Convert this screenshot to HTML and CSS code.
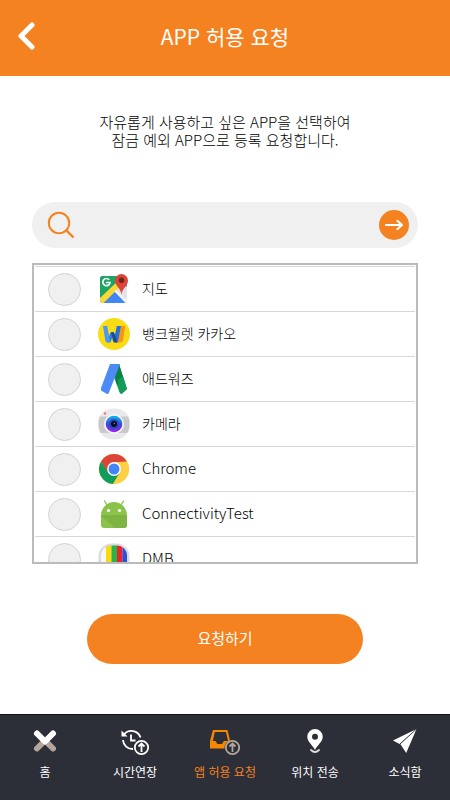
FILE: index.html
```html
<!DOCTYPE html>
<html lang="ko">
<head>
<meta charset="utf-8">
<meta name="viewport" content="width=device-width, initial-scale=1">
<title>APP 허용 요청</title>
<link rel="stylesheet" href="styles.css">
</head>
<body>
<div class="screen">
  <header class="topbar">
    <button class="back" type="button" aria-label="뒤로">
      <svg width="20" height="30" viewBox="0 0 20 30"><path d="M14 4L3 15l11 11" fill="none" stroke="#fff" stroke-width="5" stroke-linecap="round" stroke-linejoin="round"/></svg>
    </button>
    <h1 class="title">APP 허용 요청</h1>
  </header>

  <main class="content">
    <p class="intro">자유롭게 사용하고 싶은 APP을 선택하여<br>잠금 예외 APP으로 등록 요청합니다.</p>

    <form class="search">
      <label class="search-icon" for="query" aria-label="검색">
        <svg width="28" height="28" viewBox="0 0 28 28" fill="none" stroke="#f58220" stroke-width="2"><circle cx="12" cy="12" r="10.200"/><path d="M19 19l7.500 7.500" stroke-width="2.400"/></svg>
      </label>
      <input class="search-input" id="query" type="text">
      <button class="search-go" type="button" aria-label="검색하기">
        <svg width="20" height="14" viewBox="0 0 20 14" fill="none" stroke="#fff" stroke-width="2.200" stroke-linecap="round" stroke-linejoin="round"><path d="M2 7h16M13.500 3L18 7l-4.500 4"/></svg>
      </button>
    </form>

    <ul class="apps">
      <li class="app">
        <input class="check" type="checkbox" id="app1">
        <svg class="app-icon" viewBox="0 0 32 32">
          <rect x="2" y="3" width="27" height="27" rx="3" fill="#4285f4"/>
          <path d="M5 3h20v5L2 29V6a3 3 0 0 1 3-3z" fill="#1da362"/>
          <path d="M16 18l13 12V14l-5-4z" fill="#e4e4e8"/>
          <path d="M16 18L4 30h22z" fill="#4285f4"/>
          <path d="M22 6L2 25v3l1.500 2h2L26 10z" fill="#fdd835"/>
          <path d="M16 18l11.500 12 1.500-2.500-11-10.500z" fill="#f5f5f5"/>
          <path d="M11.200 6.800a3.600 3.600 0 1 0 .8 2.700H8" fill="none" stroke="#fff" stroke-width="1.700"/>
          <path d="M23.500 22C23 15 17 13 17 7.500a6.500 6.500 0 0 1 13 0C30 13 24 15 23.500 22z" fill="#db4437"/>
          <circle cx="23.500" cy="7.200" r="2.700" fill="#6d2420"/>
        </svg>
        <label class="app-name" for="app1">지도</label>
      </li>
      <li class="app">
        <input class="check" type="checkbox" id="app2">
        <svg class="app-icon" viewBox="0 0 32 32">
          <circle cx="16" cy="16" r="16" fill="#f9dc16"/>
          <path d="M23 8h4.200L25 22.500q-.5 2-3 2h-3z" fill="#f7941e"/>
          <path d="M9 24.500L12 15.500q.6-1.500 2-1.500h2l-3 9q-.6 1.500-2 1.500z" fill="#2d7de0"/>
          <path d="M5 8h4.200l3 16.500H10q-2.300 0-2.700-2z" fill="#4a9af2"/>
          <path d="M18.800 8H23l-3 15q-.4 1.500-2 1.500h-1.500l-.5-3z" fill="#2372d9"/>
          <path d="M13 14h1.500q1.500 0 2 1.500l3 9H17q-1.400 0-2-1.500z" fill="#1b4c9c"/>
        </svg>
        <label class="app-name" for="app2">뱅크월렛 카카오</label>
      </li>
      <li class="app">
        <input class="check" type="checkbox" id="app3">
        <svg class="app-icon" viewBox="0 0 32 32">
          <path d="M12 1h9l8 25-5.500 5q-1.500-.5-2-2L12 4z" fill="#0f9d58"/>
          <path d="M17 13l4-12 4 13-6 8z" fill="#0b8043"/>
          <path d="M20 17l5-4 4 13-5.500 5q-1.500-.5-2-2z" fill="#159b58"/>
          <path d="M12 1h10L11 29.500q-.7 1.700-2 1.500L3 27.500V25z" fill="#4c8bf5"/>
        </svg>
        <label class="app-name" for="app3">애드워즈</label>
      </li>
      <li class="app">
        <input class="check" type="checkbox" id="app4">
        <svg class="app-icon" viewBox="0 0 32 32">
          <defs>
            <linearGradient id="lens" x1="0" y1="0" x2="0" y2="1"><stop offset="0" stop-color="#06b9ea"/><stop offset=".55" stop-color="#4440e8"/><stop offset="1" stop-color="#a01cf4"/></linearGradient>
            <clipPath id="camera"><rect x=".5" y=".5" width="31" height="31" rx="14"/></clipPath>
          </defs>
          <g clip-path="url(#camera)">
            <path d="M0 0h32v32H0z" fill="#e9e9eb"/>
            <path d="M0 8.500h32V25H0z" fill="#c9c9ca"/>
          </g>
          <circle cx="16" cy="16" r="10" fill="#f6f6f6"/>
          <circle cx="16" cy="16" r="8.300" fill="url(#lens)"/>
          <circle cx="16" cy="16" r="5" fill="#274da9"/>
          <circle cx="16" cy="16" r="3" fill="#080a29"/>
          <circle cx="16.300" cy="15.500" r=".8" fill="#7185bd"/>
          <circle cx="7" cy="5.500" r="1.200" fill="#ee7960"/>
        </svg>
        <label class="app-name" for="app4">카메라</label>
      </li>
      <li class="app">
        <input class="check" type="checkbox" id="app5">
        <svg class="app-icon" viewBox="0 0 32 32">
          <circle cx="16" cy="16" r="15" fill="#fdd044"/>
          <path d="M3 8.500A15 15 0 0 1 29 8.500L16 9.300 9.500 19.500z" fill="#db4437"/>
          <path d="M3 8.500A15 15 0 0 0 15 31l7-11.500-6 3-6-3.300z" fill="#0f9d58"/>
          <path d="M16 9.300h13.400A15 15 0 0 1 15 31l7-11.500z" fill="#fdd044"/>
          <circle cx="16" cy="16" r="6.900" fill="#fff"/>
          <circle cx="16" cy="16" r="5.500" fill="#4285f4"/>
        </svg>
        <label class="app-name app-name-latin" for="app5">Chrome</label>
      </li>
      <li class="app">
        <input class="check" type="checkbox" id="app6">
        <svg class="app-icon" viewBox="0 0 32 32">
          <path d="M9 7L6.500 3M23 7l2.500-4" stroke="#8bc34a" stroke-width="1.400" stroke-linecap="round"/>
          <path d="M3 17.500a13 13.500 0 0 1 26 0V27q0 3-3 3H6q-3 0-3-3z" fill="#8bc34a"/>
          <path d="M3 18h26v9q0 3-3 3H17z" fill="#7fb443"/>
          <path d="M3 18h26" stroke="#71a43c" stroke-width=".8"/>
          <circle cx="10.500" cy="12.500" r="1.600" fill="#fff"/><circle cx="21.500" cy="12.500" r="1.600" fill="#fff"/>
        </svg>
        <label class="app-name app-name-latin" for="app6">ConnectivityTest</label>
      </li>
      <li class="app">
        <input class="check" type="checkbox" id="app7">
        <svg class="app-icon" viewBox="0 0 32 32">
          <defs><clipPath id="tv"><rect x="3" y="2.500" width="26" height="27" rx="10"/></clipPath></defs>
          <rect x=".5" y=".5" width="31" height="31" rx="13" fill="#d9dadd"/>
          <g clip-path="url(#tv)">
            <path d="M2 2h6v28H2z" fill="#f7f7f7"/><path d="M8 2h5.500v28H8z" fill="#fbd90c"/><path d="M13.500 2H19v28h-5.500z" fill="#2bb34b"/><path d="M19 2h5.500v28H19z" fill="#e9242c"/><path d="M24.500 2H30v28h-5.500z" fill="#2a50d8"/>
          </g>
        </svg>
        <label class="app-name app-name-latin" for="app7">DMB</label>
      </li>
    </ul>

    <button class="submit" type="button">요청하기</button>
  </main>

  <nav class="tabs">
    <a class="tab" href="#home">
      <svg class="tab-icon" viewBox="0 0 30 30" fill="none" stroke-width="6" stroke-linecap="round" stroke-linejoin="round"><path d="M7 22.500l8-8 8 8" stroke="#b5a59c"/><path d="M7 7.500l8 8 8-8" stroke="#fff"/></svg>
      <span>홈</span>
    </a>
    <a class="tab" href="#extend">
      <svg class="tab-icon" viewBox="0 0 30 30" fill="none" stroke="#fff" stroke-width="1.800">
        <path d="M4 8.500A9.500 9.500 0 0 1 20.500 11.500M3 14a9.500 9.500 0 0 0 10 9"/>
        <path d="M1.500 4.500v6h6z" fill="#fff" stroke="none"/>
        <path d="M11 8.500v6h4.500"/>
        <circle cx="21.500" cy="21.500" r="6.700"/><path d="M21.500 26v-8M18.500 20.500l3-3 3 3"/>
      </svg>
      <span>시간연장</span>
    </a>
    <a class="tab tab-active" href="#apps" aria-current="page">
      <svg class="tab-icon" viewBox="0 0 30 30" fill="none">
        <path d="M3 4h14.500L20 14.500a8 8 0 0 0-5.500 8H0V15z" fill="#f58800"/>
        <path d="M4.800 6H16l2 9h-4l-2 3H7.500l-2-3H2.800z" fill="#2d2f38"/>
        <g stroke="#b5a59c" stroke-width="1.800"><circle cx="22.500" cy="21.500" r="6.700" fill="#2d2f38"/><path d="M22.500 26v-8M19.500 20.500l3-3 3 3"/></g>
      </svg>
      <span>앱 허용 요청</span>
    </a>
    <a class="tab" href="#location">
      <svg class="tab-icon" viewBox="0 0 30 30"><path d="M15 24C13 19.500 7.300 16 7.300 10.800a7.700 7.700 0 0 1 15.400 0C22.700 16 17 19.500 15 24z" fill="#fff"/><circle cx="15" cy="10.800" r="3" fill="#2d2f38"/><path d="M11 24q4 4 8 0" fill="none" stroke="#ddd" stroke-width="1.800" stroke-linecap="round"/></svg>
      <span>위치 전송</span>
    </a>
    <a class="tab" href="#news">
      <svg class="tab-icon" viewBox="0 0 30 30" fill="#fff"><path d="M26.500 3L3 14.500l6.500 3.500z"/><path d="M26.500 3L10.300 18l5.900 9z"/><path d="M26.500 3L10 18" stroke="#2d2f38" stroke-width=".8"/></svg>
      <span>소식함</span>
    </a>
  </nav>
</div>
</body>
</html>
```

FILE: styles.css
```css
* {
  box-sizing: border-box;
}

body {
  margin: 0;
  background: #fff;
  font-family: "Noto Sans CJK KR", sans-serif;
  font-weight: 400;
  color: #000;
}

button,
input {
  margin: 0;
  padding: 0;
  border: 0;
  font: inherit;
  color: inherit;
}

svg {
  display: block;
}

.screen {
  display: flex;
  flex-direction: column;
  height: 100vh;
}

.topbar {
  display: grid;
  grid-template-columns: 32px 1fr 32px;
  align-items: center;
  height: 76px;
  padding: 0 12px 4px;
  background: #f58220;
  color: #fff;
}

.back {
  display: grid;
  place-items: center;
  height: 40px;
  background: none;
}

.title {
  margin: 0;
  font-size: 21px;
  font-weight: 400;
  line-height: 32px;
  text-align: center;
}

.content {
  display: flex;
  flex: 1;
  flex-direction: column;
  min-height: 0;
  padding: 37px 32px 50px;
}

.intro {
  margin: 0 0 53px;
  font-size: 15px;
  font-weight: 300;
  line-height: 18px;
  text-align: center;
}

.search {
  display: flex;
  flex: none;
  align-items: center;
  height: 46px;
  padding: 0 9px 0 15px;
  border-radius: 23px;
  background: #f0f0f0;
}

.search-input {
  flex: 1;
  min-width: 0;
  height: 30px;
  padding: 0 12px;
  background: none;
  font-size: 15px;
}

.search-go {
  display: grid;
  place-items: center;
  width: 30px;
  height: 30px;
  border-radius: 50%;
  background: #f58220;
}

.apps {
  flex: 1;
  min-height: 0;
  margin: 15px 0 50px;
  padding: 1px;
  border: 2px solid #bbb;
  overflow-y: auto;
  scrollbar-width: none;
  list-style: none;
}

.app {
  display: flex;
  align-items: center;
  height: 45px;
  padding-left: 13px;
  border-top: 1px solid #d8d8d8;
}

.check {
  appearance: none;
  width: 33px;
  height: 33px;
  border: 1px solid #d3d3d3;
  border-radius: 50%;
  background: #f0f0f0;
}

.check:checked {
  background: #f58220;
}

.app-icon {
  width: 32px;
  height: 32px;
  margin: 0 12px 0 17px;
}

.app-name {
  padding-bottom: 2px;
  font-size: 14px;
  font-weight: 300;
  line-height: 20px;
}

.app-name-latin {
  font-size: 15px;
}

.submit {
  flex: none;
  align-self: center;
  width: 72%;
  max-width: 276px;
  height: 50px;
  padding-bottom: 4px;
  border-radius: 25px;
  background: #f58220;
  color: #fff;
  font-size: 15px;
}

.tabs {
  display: grid;
  grid-template-columns: repeat(5, 1fr);
  height: 86px;
  padding-top: 11px;
  border-top: 1px solid #111;
  background: #2d2f38;
}

.tab {
  display: flex;
  flex-direction: column;
  align-items: center;
  gap: 7px;
  color: #fff;
  font-size: 12px;
  line-height: 18px;
  text-decoration: none;
}

.tab-active {
  color: #f58220;
}

.tab-icon {
  width: 30px;
  height: 30px;
}
```
